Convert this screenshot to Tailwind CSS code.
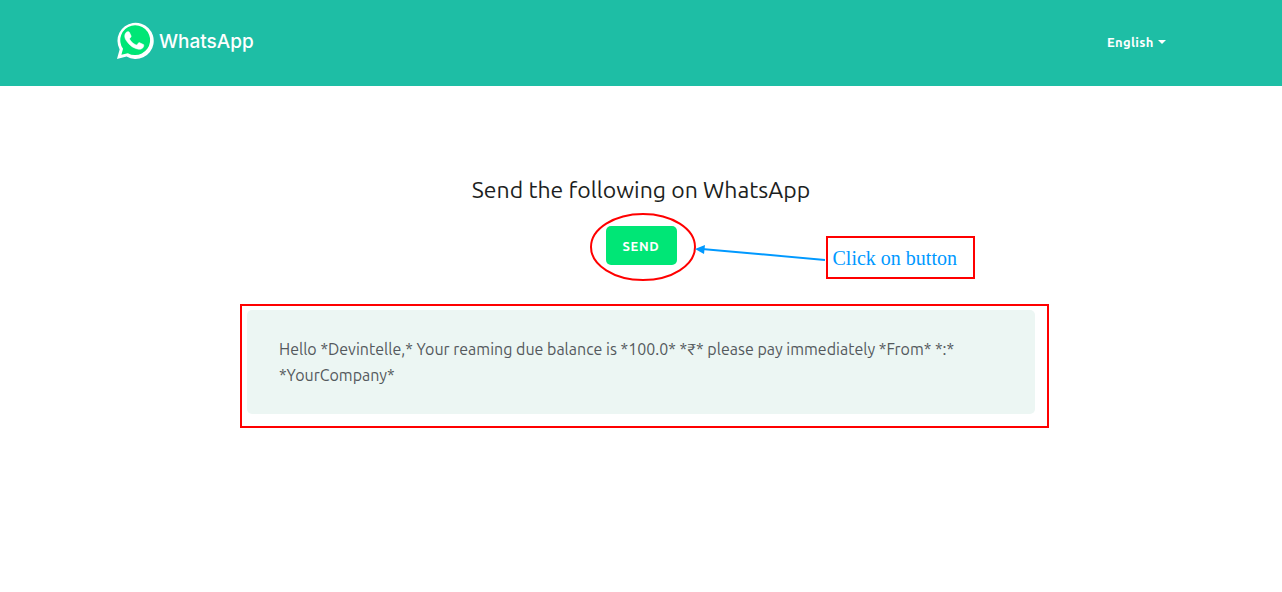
<!DOCTYPE html>
<html lang="en">
<head>
<meta charset="utf-8">
<meta name="viewport" content="width=device-width, initial-scale=1">
<title>Share on WhatsApp</title>
<script src="https://cdn.jsdelivr.net/npm/@tailwindcss/browser@4"></script>
</head>
<body class="min-h-screen bg-white font-[Ubuntu,'Noto_Sans',sans-serif]">
<header class="bg-[#1ebea5] px-4">
  <div class="mx-auto flex h-[86px] max-w-[1050px] items-center justify-between pb-[2px]">
    <a href="#" class="flex items-center gap-[3px] text-white" aria-label="WhatsApp">
      <svg class="size-10" viewBox="0 2 40 40" aria-hidden="true">
        <g transform="translate(0 .8) scale(.98)">
          <path d="M1 39 3.700 29.2A18.500 18.500 0 1 1 10.8 36.500Z" fill="#fff"/>
          <path d="M5.500 34.6 7.200 28.6A15.200 15.200 0 1 1 12.100 33Z" fill="#00e676"/>
        </g>
        <path transform="translate(.1 1.9) scale(.9)" stroke="#fff" stroke-width=".6" d="M14.9 11.7c-.4-.8-.8-.8-1.1-.8h-1c-.4 0-.9.1-1.400.7-.5.500-1.800 1.800-1.800 4.300s1.900 5 2.100 5.300c.3.300 3.600 5.700 8.900 7.800 4.400 1.700 5.300 1.400 6.300 1.300.9-.1 3-1.200 3.500-2.500.4-1.200.4-2.200.3-2.400-.1-.2-.5-.4-1-.6l-3.600-1.700c-.5-.2-.8-.3-1.200.3l-1.600 2c-.3.400-.6.400-1.100.100-.5-.2-2.200-.8-4.200-2.600-1.600-1.400-2.600-3.100-2.900-3.600-.3-.5 0-.8.2-1.100l.8-.9c.3-.3.300-.5.500-.9.200-.3.100-.6 0-.9Z" fill="#fff"/>
      </svg>
      <span class="font-[Inter,sans-serif] text-[19px] font-medium">WhatsApp</span>
    </a>
    <div class="flex items-center gap-1 text-white">
      <select aria-label="Language" class="cursor-pointer appearance-none bg-transparent text-[13px] leading-5 font-semibold tracking-wide">
        <option>English</option>
      </select>
      <svg class="h-1 w-2" viewBox="0 0 8 4" aria-hidden="true"><path d="M0 0h8L4 4z" fill="currentColor"/></svg>
    </div>
  </div>
</header>
<main class="mx-auto flex max-w-[788px] flex-col items-center pt-[88px]">
  <h1 class="text-[23px] leading-8 font-normal text-[#1c1e21]">Send the following on WhatsApp</h1>
  <div class="relative mt-5">
    <button type="button" class="block h-[39px] w-[71px] rounded-[5px] bg-[#00e676] pt-[2px] text-[13px] font-bold tracking-wider text-white">SEND</button>
    <svg class="pointer-events-none absolute -top-4 -left-4 h-[72px] w-[240px] max-w-none" viewBox="0 0 240 72" fill="none" aria-hidden="true">
      <ellipse cx="53" cy="37" rx="52" ry="33" stroke="#f00" stroke-width="2"/>
      <path d="M235 50 112 39" stroke="#09f" stroke-width="2"/>
      <path d="M105 39l10-4-1 9z" fill="#09f"/>
    </svg>
    <p class="absolute top-[10px] left-[220px] flex h-[43px] w-[149px] items-center border-2 border-[#f00] pl-[5px] font-['Liberation_Serif',serif] text-xl whitespace-nowrap text-[#09f]">Click on button</p>
  </div>
  <section class="relative mt-[45px] w-full rounded-[5px] bg-[#ecf6f3] p-8 pt-[26px] pb-[26px]">
    <p class="text-base leading-[26px] text-[#54595d]">Hello *Devintelle,* Your reaming due balance is *100.0* *₹* please pay immediately *From* *:* *YourCompany*</p>
    <div class="pointer-events-none absolute -top-[6px] -right-[14px] -bottom-[14px] -left-[7px] border-2 border-[#f00]" aria-hidden="true"></div>
  </section>
</main>
</body>
</html>
